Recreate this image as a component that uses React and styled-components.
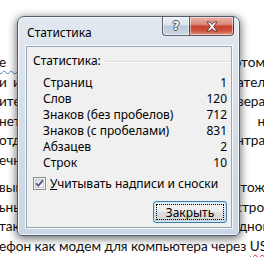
import React from "react";
import styled, { createGlobalStyle } from "styled-components";

const GlobalStyle = createGlobalStyle`
  html, body {
    margin: 0;
    padding: 0;
    background: #ffffff;
  }
  body {
    width: 264px;
    height: 257px;
    overflow: hidden;
  }
`;

const Page = styled.div`
  position: relative;
  width: 264px;
  height: 257px;
  overflow: hidden;
  background: #ffffff;
`;

/* документ Word за окном */
const Document = styled.div`
  margin-left: -1px;
  width: 273px;
  padding-top: 53px;
  font-family: Lato, "Open Sans", sans-serif;
  font-size: 13.6px;
  line-height: 19.5px;
  color: #111;
`;

const Paragraph = styled.div`
  & + & {
    margin-top: 8px;
  }
`;

const Line = styled.div`
  white-space: nowrap;
  text-align: justify;
  text-align-last: ${(p) => (p.$last ? "left" : "justify")};
`;

const Grammar = styled.span`
  text-decoration: underline wavy #4f81bd;
  text-decoration-thickness: 1px;
  text-underline-offset: 3px;
`;

const Spelling = styled.span`
  text-decoration: underline wavy #e02020;
  text-decoration-thickness: 1px;
  text-underline-offset: 3px;
`;

/* окно диалога */
const Window = styled.div`
  position: absolute;
  left: 17px;
  top: 16px;
  width: 223px;
  height: 220px;
  box-sizing: border-box;
  display: flex;
  flex-direction: column;
  padding: 0 7px 7px 8px;
  border: 1px solid #4e5d6e;
  border-radius: 7px 7px 5px 5px;
  background: linear-gradient(180deg, #e2e8ef 0%, #d5dee8 45%, #c9d6e5 100%);
  box-shadow: inset 0 0 0 1px rgba(255, 255, 255, 0.75),
    0 2px 9px 1px rgba(0, 0, 0, 0.55);
  font-family: "Segoe UI", "Noto Sans", sans-serif;
  font-size: 12px;
  color: #000;
`;

const TitleBar = styled.div`
  height: 29px;
  display: flex;
  align-items: flex-start;
  justify-content: space-between;
`;

const Title = styled.div`
  margin: 8px 0 0 1px;
  line-height: 15px;
  color: #000;
`;

const CaptionButtons = styled.div`
  display: flex;
  margin-right: -2px;
`;

const CaptionButton = styled.div`
  width: ${(p) => (p.$close ? 45 : 28)}px;
  height: 19px;
  box-sizing: border-box;
  display: flex;
  align-items: center;
  justify-content: center;
  border: 1px solid rgba(40, 45, 55, 0.7);
  border-top: none;
  border-radius: ${(p) => (p.$close ? "0 0 4px 0" : "0 0 0 4px")};
  margin-left: ${(p) => (p.$close ? "-1px" : "0")};
  background: ${(p) =>
    p.$close
      ? "linear-gradient(180deg, #eab0a6 0%, #dc8b7f 40%, #c8412f 52%, #cd5442 78%, #e09a8c 100%)"
      : "linear-gradient(180deg, #eef2f6 0%, #dbe3ec 42%, #bccad9 52%, #cbd7e4 100%)"};
  box-shadow: inset 0 0 0 1px rgba(255, 255, 255, 0.5);
`;

const HelpGlyph = styled.span`
  font-family: "DejaVu Sans", sans-serif;
  font-weight: bold;
  font-size: 12px;
  line-height: 12px;
  color: #ffffff;
  text-shadow: 1px 0 0 #4a5563, -1px 0 0 #4a5563, 0 1px 0 #4a5563,
    0 -1px 0 #4a5563;
`;

const Client = styled.div`
  flex: 1;
  display: flex;
  flex-direction: column;
  padding: 6px 1px 4px 6px;
  background: #f0f0f0;
  border: 1px solid #94a6ba;
  box-shadow: 0 0 0 1px rgba(255, 255, 255, 0.8);
`;

const GroupHeader = styled.div`
  display: flex;
  align-items: center;
  gap: 4px;
  line-height: 15px;
`;

const GroupRule = styled.div`
  flex: 1;
  height: 0;
  margin-top: 2px;
  border-top: 1px solid #dcdcdc;
  border-bottom: 1px solid #ffffff;
`;

const StatsList = styled.div`
  margin-top: 6px;
  display: flex;
  flex-direction: column;
`;

const StatRow = styled.div`
  height: 16px;
  display: grid;
  grid-template-columns: 1fr auto;
  align-items: center;
  padding: 0 3px 0 10px;
  line-height: 15px;
`;

const CheckRow = styled.label`
  margin-top: 6px;
  height: 15px;
  display: flex;
  align-items: center;
  gap: 4px;
  line-height: 15px;
`;

const AccessKey = styled.span`
  text-decoration: underline;
`;

const ButtonRow = styled.div`
  margin-top: 10px;
  display: flex;
  justify-content: flex-end;
  padding-right: 3px;
`;

const Button = styled.button`
  width: 74px;
  height: 22px;
  padding: 2px;
  box-sizing: border-box;
  border: 1px solid #3c7fb1;
  border-radius: 3px;
  background: linear-gradient(180deg, #f4f4f4 0%, #ececec 48%, #dedede 52%, #d2d2d2 100%);
  box-shadow: inset 0 0 0 1px rgba(200, 230, 250, 0.9);
  font: inherit;
  color: #000;
`;

const FocusRect = styled.span`
  display: flex;
  align-items: center;
  justify-content: center;
  height: 100%;
  box-sizing: border-box;
  outline: 1px dotted #000;
  outline-offset: -1px;
  line-height: 15px;
`;

const stats = [
  ["Страниц", "1"],
  ["Слов", "120"],
  ["Знаков (без пробелов)", "712"],
  ["Знаков (с пробелами)", "831"],
  ["Абзацев", "2"],
  ["Строк", "10"],
];

function CloseIcon() {
  return (
    <svg width="12" height="11" viewBox="0 0 12 11">
      <path
        d="M1 1 L4 1 L6 3.5 L8 1 L11 1 L7.6 5.5 L11 10 L8 10 L6 7.5 L4 10 L1 10 L4.4 5.5 Z"
        fill="#ffffff"
        stroke="#5a2a25"
        strokeWidth="0.9"
        strokeLinejoin="round"
      />
    </svg>
  );
}

function CheckBox() {
  return (
    <svg width="13" height="13" viewBox="0 0 13 13">
      <defs>
        <linearGradient id="cbFill" x1="0" y1="0" x2="1" y2="1">
          <stop offset="0" stopColor="#dcdcdc" />
          <stop offset="1" stopColor="#ffffff" />
        </linearGradient>
      </defs>
      <rect x="0.5" y="0.5" width="12" height="12" fill="#f4f4f4" stroke="#8e8f8f" />
      <rect x="2.5" y="2.5" width="8" height="8" fill="url(#cbFill)" stroke="#c8c8c8" />
      <path
        d="M3.2 6.4 L5.4 8.8 L9.8 3.4"
        fill="none"
        stroke="#3f5688"
        strokeWidth="1.7"
        strokeLinejoin="round"
      />
    </svg>
  );
}

export default function App() {
  return (
    <Page>
      <GlobalStyle />
      <Document>
        <Paragraph>
          <Line>
            <Grammar>е настройки</Grammar> телефона согласно этому
          </Line>
          <Line>и или планшет без участия пользователя</Line>
          <Line>итерфейс от оператора на серверах</Line>
          <Line>нетсоединение включается это на</Line>
          <Line>отдельно, как в сервисных центрах</Line>
          <Line $last>ечно, без программ.</Line>
        </Paragraph>
        <Paragraph>
          <Line>выгодно использовать его тоже</Line>
          <Line>ьный модем для своих устрой</Line>
          <Line>так же, как и в любом одном</Line>
          <Line>
            ефон как модем для компьютера через <Spelling>USB</Spelling>
          </Line>
        </Paragraph>
      </Document>

      <Window>
        <TitleBar>
          <Title>Статистика</Title>
          <CaptionButtons>
            <CaptionButton>
              <HelpGlyph>?</HelpGlyph>
            </CaptionButton>
            <CaptionButton $close>
              <CloseIcon />
            </CaptionButton>
          </CaptionButtons>
        </TitleBar>
        <Client>
          <GroupHeader>
            <span>Статистика:</span>
            <GroupRule />
          </GroupHeader>
          <StatsList>
            {stats.map(([name, value]) => (
              <StatRow key={name}>
                <span>{name}</span>
                <span>{value}</span>
              </StatRow>
            ))}
          </StatsList>
          <CheckRow>
            <CheckBox />
            <span>
              <AccessKey>У</AccessKey>читывать надписи и сноски
            </span>
          </CheckRow>
          <ButtonRow>
            <Button>
              <FocusRect>Закрыть</FocusRect>
            </Button>
          </ButtonRow>
        </Client>
      </Window>
    </Page>
  );
}
